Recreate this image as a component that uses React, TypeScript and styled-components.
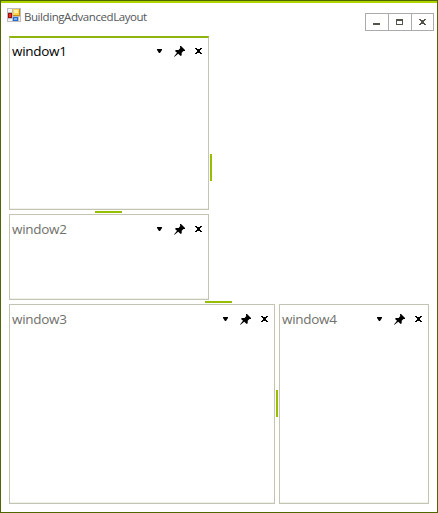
import React from "react";
import styled, { createGlobalStyle } from "styled-components";

const GlobalStyle = createGlobalStyle`
  html, body, #root { margin: 0; height: 100%; }
  * { box-sizing: border-box; }
`;

const Frame = styled.main`
  height: 513px;
  width: 438px;
  background: #fff;
  border: 1px solid #506700;
  font-family: "Open Sans", "Noto Sans", sans-serif;
  display: flex;
  flex-direction: column;
  overflow: hidden;
`;

const TitleBar = styled.header`
  height: 35px;
  border-top: 2px solid #aed500;
  padding: 5px 3px 0 6px;
  display: flex;
  align-items: flex-start;
  flex: none;
`;

const Title = styled.h1`
  margin: 0 auto 0 3px;
  font-size: 11.5px;
  line-height: 17px;
  font-weight: 400;
  letter-spacing: -0.43px;
  color: #53565a;
  white-space: nowrap;
`;

const WindowControls = styled.div`
  display: flex;
  margin-top: 5px;
  border: 1px solid #ababab;
`;

const ControlButton = styled.button`
  width: 22px;
  height: 16px;
  padding: 0 0 0 7px;
  border: 0;
  background: #fff;
  display: flex;
  align-items: center;
  & + & {
    width: 23px;
    border-left: 1px solid #ababab;
  }
  &:last-child {
    width: 22px;
  }
`;

const Icon = styled.svg`
  display: block;
  flex: none;
`;

const Workspace = styled.section`
  padding: 0 8px;
  display: grid;
  grid-template-rows: 264px 4px 200px;
`;

const UpperArea = styled.div`
  display: grid;
  grid-template-columns: 200px 4px 1fr;
`;

const WindowStack = styled.div`
  display: grid;
  grid-template-rows: 174px 4px 86px;
`;

const LowerArea = styled.div`
  display: grid;
  grid-template-columns: 266px 4px 150px;
`;

const Splitter = styled.div<{ $vertical?: boolean }>`
  display: flex;
  align-items: center;
  justify-content: center;
  padding: ${(p) => (p.$vertical ? "0 0 1px" : "0 1px 0 0")};
  &::before {
    content: "";
    width: ${(p) => (p.$vertical ? 2 : 27)}px;
    height: ${(p) => (p.$vertical ? 27 : 2)}px;
    background: #95bf00;
  }
`;

const Panel = styled.article<{ $active?: boolean }>`
  border: 1px solid #c4c4b3;
  border-top: ${(p) => (p.$active ? "2px solid #8fb30d" : "1px solid #c4c4b3")};
  box-shadow: inset 0 -1px #f0f0ec;
  padding-top: ${(p) => (p.$active ? 0 : 1)}px;
  overflow: hidden;
`;

const PanelHeader = styled.div<{ $active?: boolean }>`
  height: 26px;
  padding: 0 6px 0 2px;
  display: flex;
  align-items: center;
  color: ${(p) => (p.$active ? "#000" : "#70706b")};
`;

const PanelTitle = styled.h2`
  margin: 0 auto 0 0;
  font-size: 13.5px;
  line-height: 24px;
  font-weight: 400;
  letter-spacing: -0.3px;
`;

const PanelActions = styled.div`
  display: flex;
  align-items: center;
  gap: 12px;
  color: #000;
`;

const PinIcon = styled(Icon)`
  margin-right: -2px;
`;

const AppIcon = () => (
  <Icon width="14" height="14" viewBox="0 0 14 14" shapeRendering="crispEdges" aria-hidden="true">
    <path fill="#bebebe" d="M0 0h14v14H0z" />
    <path fill="#f1f1f1" d="M1 1h4v3H1zM1 11h4v2H1zM12 9h1v4h-1z" />
    <path fill="#9c1010" d="M1 5h4v5H1z" />
    <path fill="#ef2b1e" d="M2 6h2v3H2z" />
    <path fill="#c58b16" d="M6 1h7v7H6z" />
    <path fill="#ffd34e" d="M6 1h6v6H6z" />
    <path fill="#fff0a6" d="M7 2h4v3H7z" />
    <path fill="#2868ca" d="M6 9h5v4H6z" />
    <path fill="#78b4fa" d="M7 10h3v2H7z" />
  </Icon>
);

type DockPanelProps = { title: string; active?: boolean };

const DockPanel = ({ title, active }: DockPanelProps) => (
  <Panel $active={active}>
    <PanelHeader $active={active}>
      <PanelTitle>{title}</PanelTitle>
      <PanelActions>
        <Icon width="5" height="4" viewBox="0 0 5 4">
          <path d="M0 0h5v1L3 4H2L0 1z" />
        </Icon>
        <PinIcon width="11" height="11" viewBox="0 0 11 11">
          <path d="M6 0h1l4 4v1H9.5L7.7 6.8v2.5l-1 .7L4.2 7.8.5 10.8 0 10.5l3-3.7L1 5l.8-1h2.8L6.3 2 6 1z" />
        </PinIcon>
        <Icon width="7" height="6" viewBox="0 0 7 6" shapeRendering="crispEdges">
          <path d="M0 0h2v1h3V0h2v1H6v1H5v2h1v1h1v1H5V5H2v1H0V5h1V4h1V2H1V1H0z" />
        </Icon>
      </PanelActions>
    </PanelHeader>
  </Panel>
);

export default function App() {
  return (
    <>
      <GlobalStyle />
      <Frame>
        <TitleBar>
          <AppIcon />
          <Title>BuildingAdvancedLayout</Title>
          <WindowControls>
            <ControlButton aria-label="Minimize">
              <Icon width="7" height="6" viewBox="0 0 7 6" fill="#53534b">
                <path d="M0 4h7v2H0z" />
              </Icon>
            </ControlButton>
            <ControlButton aria-label="Maximize">
              <Icon width="7" height="6" viewBox="0 0 7 6" fill="#53534b">
                <path fillRule="evenodd" d="M0 0h7v6H0zM1 2v3h5V2z" />
              </Icon>
            </ControlButton>
            <ControlButton aria-label="Close">
              <Icon width="7" height="6" viewBox="0 0 7 6" fill="#53534b" shapeRendering="crispEdges">
                <path d="M0 0h2v1h3V0h2v1H6v1H5v2h1v1h1v1H5V5H2v1H0V5h1V4h1V2H1V1H0z" />
              </Icon>
            </ControlButton>
          </WindowControls>
        </TitleBar>
        <Workspace>
          <UpperArea>
            <WindowStack>
              <DockPanel title="window1" active />
              <Splitter />
              <DockPanel title="window2" />
            </WindowStack>
            <Splitter $vertical />
          </UpperArea>
          <Splitter />
          <LowerArea>
            <DockPanel title="window3" />
            <Splitter $vertical />
            <DockPanel title="window4" />
          </LowerArea>
        </Workspace>
      </Frame>
    </>
  );
}
